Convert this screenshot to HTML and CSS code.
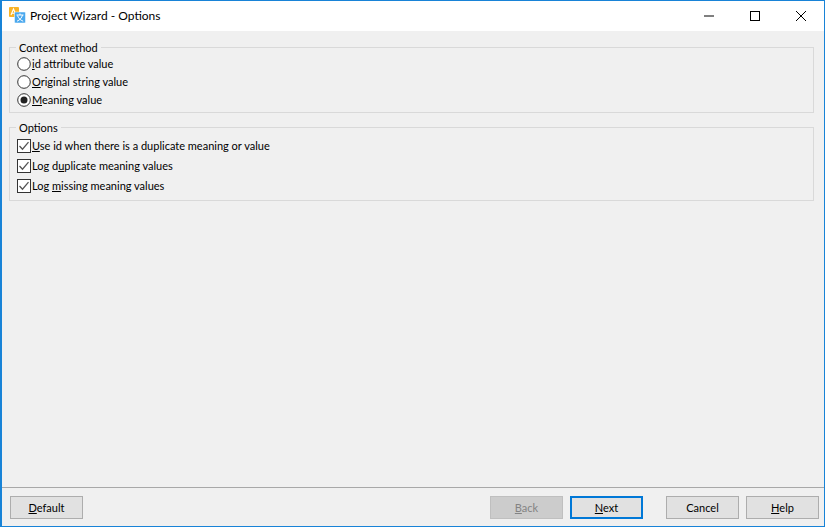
FILE: index.html
```html
<!DOCTYPE html>
<html lang="en">
<head>
<meta charset="utf-8">
<title>Project Wizard - Options</title>
<link rel="stylesheet" href="styles.css">
</head>
<body>
<div class="window">
  <header class="titlebar">
    <svg class="app-icon" width="20" height="20" viewBox="0 0 20 20">
      <rect x="0" y="1" width="10" height="10" rx="1" fill="#f9b326"/>
      <path d="M2 9l2.500-6 2.500 6M3 7.200h3" fill="none" stroke="#fff" stroke-width="1.100"/>
      <rect x="5.500" y="6" width="11" height="11" rx="1" fill="#4aa8ee" stroke="#fff" stroke-width="0.5"/>
      <path d="M7.500 9h7M11 7.500v1.500M13.500 9c-.6 2.800-2.600 5-5.500 6.200M8.500 9.500c.8 2.500 2.800 4.700 5.700 5.700" fill="none" stroke="#fff" stroke-width="1"/>
    </svg>
    <span class="title">Project Wizard - Options</span>
    <div class="controls">
      <svg class="ctl" width="46" height="30" viewBox="0 0 46 30"><path d="M18 15h10" stroke="#000" stroke-width="1" fill="none"/></svg>
      <svg class="ctl" width="46" height="30" viewBox="0 0 46 30"><rect x="18.500" y="10.500" width="9" height="9" stroke="#000" stroke-width="1" fill="none"/></svg>
      <svg class="ctl" width="46" height="30" viewBox="0 0 46 30"><path d="M18 10l10 10M28 10l-10 10" stroke="#000" stroke-width="1" fill="none"/></svg>
    </div>
  </header>
  <main class="content">
    <fieldset class="group group-radio">
      <legend>Context method</legend>
      <div class="row">
        <svg class="mark" width="14" height="14" viewBox="0 0 14 14"><circle cx="7" cy="7" r="6.300" fill="#fff" stroke="#333"/></svg>
        <span><u>i</u>d attribute value</span>
      </div>
      <div class="row">
        <svg class="mark" width="14" height="14" viewBox="0 0 14 14"><circle cx="7" cy="7" r="6.300" fill="#fff" stroke="#333"/></svg>
        <span><u>O</u>riginal string value</span>
      </div>
      <div class="row">
        <svg class="mark" width="14" height="14" viewBox="0 0 14 14"><circle cx="7" cy="7" r="6.300" fill="#fff" stroke="#333"/><circle cx="7" cy="7" r="3.500" fill="#222"/></svg>
        <span><u>M</u>eaning value</span>
      </div>
    </fieldset>
    <fieldset class="group group-check">
      <legend>Options</legend>
      <div class="row row-check">
        <svg class="mark" width="14" height="14" viewBox="0 0 14 14"><rect x=".5" y=".5" width="13" height="13" fill="#fff" stroke="#333"/><path d="M2.500 7l3 3.200 6-7" fill="none" stroke="#555" stroke-width="1.300"/></svg>
        <span><u>U</u>se id when there is a duplicate meaning or value</span>
      </div>
      <div class="row row-check">
        <svg class="mark" width="14" height="14" viewBox="0 0 14 14"><rect x=".5" y=".5" width="13" height="13" fill="#fff" stroke="#333"/><path d="M2.500 7l3 3.200 6-7" fill="none" stroke="#555" stroke-width="1.300"/></svg>
        <span>Log d<u>u</u>plicate meaning values</span>
      </div>
      <div class="row row-check">
        <svg class="mark" width="14" height="14" viewBox="0 0 14 14"><rect x=".5" y=".5" width="13" height="13" fill="#fff" stroke="#333"/><path d="M2.500 7l3 3.200 6-7" fill="none" stroke="#555" stroke-width="1.300"/></svg>
        <span>Log <u>m</u>issing meaning values</span>
      </div>
    </fieldset>
  </main>
  <footer class="footer">
    <button class="btn"><u>D</u>efault</button>
    <div class="spacer"></div>
    <button class="btn btn-disabled"><u>B</u>ack</button>
    <button class="btn btn-primary"><u>N</u>ext</button>
    <button class="btn btn-cancel">Cancel</button>
    <button class="btn"><u>H</u>elp</button>
  </footer>
</div>
</body>
</html>
```
FILE: styles.css
```css
* { box-sizing: border-box; }
html, body { margin: 0; height: 100%; }
body {
  font-family: Lato, Roboto, sans-serif;
  font-size: 11px;
  color: #000;
}
.window {
  width: 825px;
  height: 527px;
  display: flex;
  flex-direction: column;
  background: #f0f0f0;
  border: 1px solid #1883d7;
  border-left-width: 2px;
}
.titlebar {
  height: 30px;
  flex: none;
  background: #fff;
  display: flex;
  align-items: center;
  padding-left: 7px;
}
.app-icon { flex: none; margin-right: 1px; }
.title { font-size: 12px; flex: 1; padding-bottom: 2px; }
.controls { display: flex; }
.ctl { display: block; }
.content {
  flex: 1;
  padding: 9px 10px 0 7px;
}
.group {
  margin: 0;
  border: 1px solid #d9d9d9;
  padding: 0;
  min-width: 0;
}
.group legend {
  margin-left: 6px;
  padding: 0 3px;
  line-height: 15px;
}
.group-radio { height: 73px; margin-bottom: 7px; }
.group-check { height: 81px; padding-top: 1px; }
.row {
  height: 18px;
  display: flex;
  align-items: center;
  gap: 1px;
  padding-left: 7px;
  line-height: 18px;
  white-space: nowrap;
}
.row-check { height: 20px; }
.mark { flex: none; display: block; }
.footer {
  height: 39px;
  flex: none;
  border-top: 1px solid #a8a8a8;
  display: flex;
  align-items: flex-start;
  padding: 8px 5px 0 8px;
}
.spacer { flex: 1; }
.btn {
  width: 73px;
  height: 23px;
  padding: 0;
  font: inherit;
  color: #000;
  background: #e1e1e1;
  border: 1px solid #adadad;
  margin-left: 7px;
}
.btn:first-child { margin-left: 0; }
.btn-disabled { background: #cccccc; color: #838383; border-color: #bfbfbf; }
.btn-primary { border: 2px solid #0078d7; }
.btn-cancel { margin-left: 23px; }
```
